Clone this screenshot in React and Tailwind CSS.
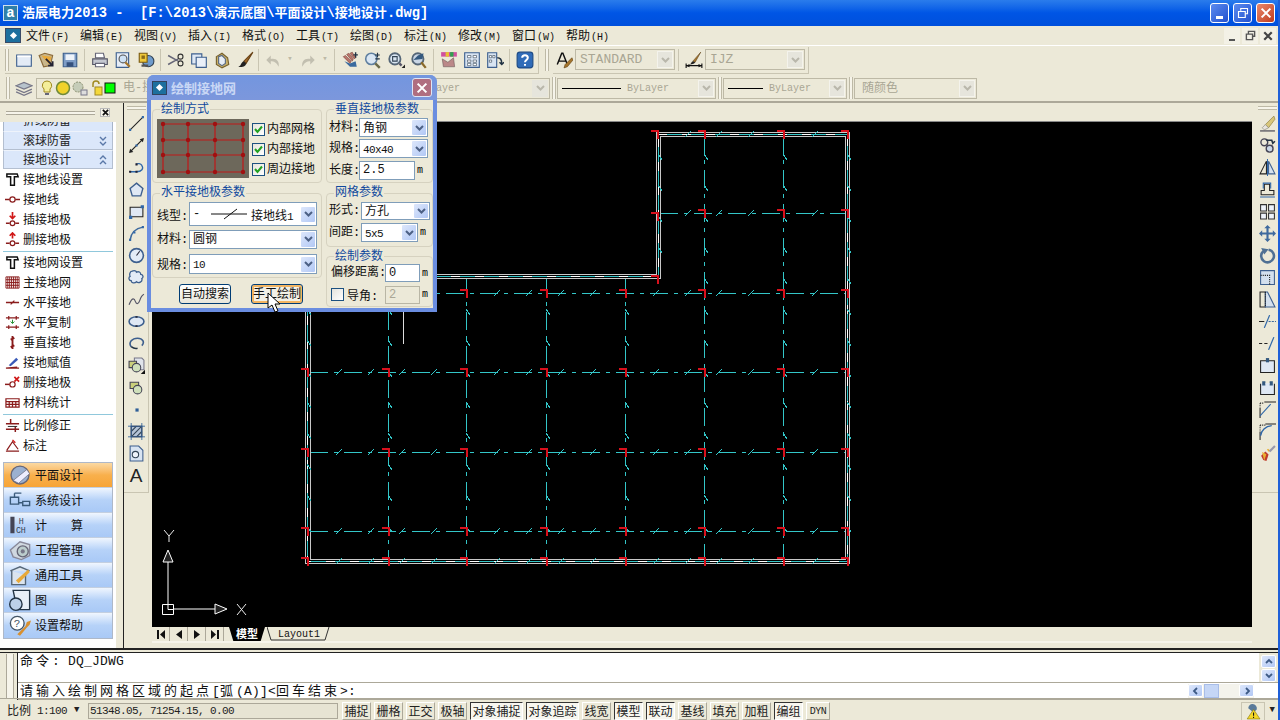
import React from "react"

function Mix({ text, latin }) {
  return text.split(/([\u3000-\u9fff\uff00-\uffef]+)/).map((p, i) =>
    /[\u3000-\u9fff\uff00-\uffef]/.test(p) ? <span key={i}>{p}</span> : <span key={i} className={latin}>{p}</span>
  )
}

const Svg = ({ s = 16, children }) => (
  <svg width={s} height={s} viewBox="0 0 16 16" fill="none" className="shrink-0">{children}</svg>
)

const DK = "#8a1c1c"

const tb = {
  new: <><path d="M1.5 3.5h13v10h-13z" fill="#e3ebf6" stroke="#3d5f8e" /><path d="M2 4h12v1.5H2z" fill="#fff" /></>,
  open: <><path d="M1 4l5-2 7 2-2 9-6 1z" fill="#c9b68a" stroke="#8a6a3a" /><path d="M3 4l9 1-2 7" fill="#e8a93a" /><path d="M7 7l6 6M9 13h4V9" stroke="#223" strokeWidth="1.6" /></>,
  save: <><path d="M2 2h12v12H2z" fill="#7d9cc6" stroke="#3d5f8e" /><path d="M4 3h8v5H4z" fill="#eef3fa" /><path d="M5 10h6v4H5z" fill="#34507c" /></>,
  print: <><path d="M4 2h7l1 4H4z" fill="#fff" stroke="#667" /><path d="M1.5 7h13v5h-13z" fill="#c5c8d0" stroke="#556" /><path d="M4 11h8v3H4z" fill="#fff" stroke="#667" /></>,
  preview: <><path d="M2 1.5h11v13H2z" fill="#e6edf7" stroke="#3d5f8e" /><circle cx="8" cy="7" r="3.5" fill="#cfe2f5" stroke="#555" /><path d="M10 10l4 4" stroke="#a5752c" strokeWidth="2" /></>,
  publish: <><circle cx="10" cy="9" r="5" fill="#6f9bcc" stroke="#345" /><path d="M2 2h7v8H2z" fill="#f0c93a" stroke="#7a5a10" /><path d="M4 4h3v3H4z" fill="#8a6a18" /><path d="M4 13h6" stroke="#555" strokeWidth="2" /></>,
  cut: <><circle cx="12" cy="5" r="2.2" stroke="#333" /><circle cx="12" cy="11" r="2.2" stroke="#333" /><path d="M1 4l9 5M1 12l9-5" stroke="#667" strokeWidth="1.3" /></>,
  copy: <><path d="M1.5 2.5h9v9h-9z" fill="#dfe8f4" stroke="#3d5f8e" /><path d="M5.5 5.5h9v9h-9z" fill="#e9eff8" stroke="#3d5f8e" /></>,
  paste: <><path d="M3 5l5-3 5 4 1 6-6 3-5-3z" fill="#c8b06a" stroke="#76602c" /><path d="M5 5l3-1 3 3v4l-3 2-3-2z" fill="#e8eef6" stroke="#5a6a80" /></>,
  brush: <><path d="M15 1L7 9l2 2z" fill="#a06a2c" stroke="#6a4418" /><path d="M7 9c-3 1-2 4-5 5 4 1 7-1 7-3z" fill="#222" /></>,
  undo: <path d="M13 14c1-5-2-8-7-7V4L2 8l4 4V9c3 0 5 1 7 5z" fill="#c2bfb0" />,
  redo: <path d="M3 14c-1-5 2-8 7-7V4l4 4-4 4V9c-3 0-5 1-7 5z" fill="#c2bfb0" />,
  pan: <><path d="M2 5l6 6 1-2-5-5zM5 3l5 6 1-2-4-5zM8 2l4 5 1-1-3-5z" fill="#b9756c" stroke="#7a4038" strokeWidth=".5" /><path d="M3 9l5 5h6l-1-5-5 2z" fill="#3a6a9e" /><path d="M13 1v5M11 3.5h4" stroke="#234" strokeWidth="1.2" /></>,
  zoom: <><circle cx="6.5" cy="7" r="5" fill="#d9e6f3" stroke="#5f7f9f" strokeWidth="1.4" /><path d="M10 11l4 4" stroke="#6a6a4a" strokeWidth="2.2" /><path d="M12 1.5v4M10 3.5h4M10 7h4" stroke="#234" /></>,
  zoomw: <><circle cx="7" cy="7" r="5" fill="#d9e6f3" stroke="#567" strokeWidth="1.6" /><path d="M5 5h4v4H5z" stroke="#345" /><path d="M11 11l2 2" stroke="#556" strokeWidth="2" /><path d="M13 15h3v-3z" fill="#222" /></>,
  zoomp: <><circle cx="7" cy="7" r="5" fill="#c9d6e6" stroke="#567" strokeWidth="1.6" /><path d="M10 10l4 5" stroke="#8a6a2a" strokeWidth="2" /><path d="M3 8l4-4 5-2-1 5z" fill="#34597f" /></>,
  palette: <><path d="M1 1h14v4H1z" fill="#d050a0" /><path d="M5 1h3v4H5z" fill="#e8c030" /><path d="M9 1h3v4H9z" fill="#30a050" /><path d="M2 7l5 3 5-4 1 8H3z" fill="#b88" stroke="#655" strokeWidth=".5" /></>,
  props: <><path d="M1.5 1.5h13v13h-13z" fill="#d8e4f2" stroke="#3d5f8e" /><path d="M4 4h3v2H4zM9 4h3v2H9zM4 8h3v2H4zM9 8h3v2H9zM4 11h3v2H4zM9 11h3v2H9z" fill="#fff" stroke="#456" strokeWidth=".6" /></>,
  design: <><path d="M1.5 1.5h8v13h-8z" fill="#d8e4f2" stroke="#3d5f8e" /><path d="M3 4h2v2H3zM6 4h2v2H6zM3 8h2v2H3z" fill="#fff" stroke="#456" strokeWidth=".6" /><path d="M10 6c3 0 4 2 4 5M12 10l2 2 2-2" stroke="#234" strokeWidth="1.3" /></>,
  help: <><rect x="1" y="1" width="14" height="14" rx="2.5" fill="#2f6bb8" stroke="#1d4a85" /><path d="M5.5 6c0-3 5-3 5 0 0 2-2.500 2-2.500 4M8 11.500v1.500" stroke="#fff" strokeWidth="1.800" /></>,
  textStyle: <><path d="M2 12L6 2h1l4 10M3.500 9h6" stroke="#111" strokeWidth="1.300" /><path d="M15 6l-6 6-1 3 3-1 5-6z" fill="#a5752c" stroke="#5a3a10" strokeWidth=".5" /></>,
  dim: <><path d="M1 11v4M15 11v4M1 13h14" stroke="#111" /><path d="M1 13l3-1.500v3zM15 13l-3-1.500v3z" fill="#111" /><path d="M14 1L7 9l2 1z" fill="#a5752c" stroke="#5a3a10" strokeWidth=".5" /><path d="M7 9c-2 1-1 2-3 3 3 0 5-1 5-2z" fill="#222" /></>,
  layers: <><path d="M1 6l7-3 7 3-7 3z" fill="#b7c3cc" stroke="#778" /><path d="M1 9l7 3 7-3M1 11.500l7 3 7-3" stroke="#778" strokeWidth="1.200" /></>,
}

const dr = {
  line: <><path d="M2 14L14 2" stroke="#222" /><path d="M1 13h2v2H1zM13 1h2v2h-2z" fill="#2f67a8" /></>,
  xline: <><path d="M2 14L14 2" stroke="#222" strokeWidth="1.200" /><path d="M15 1l-4 1 3 3zM1 15l4-1-3-3z" fill="#222" /><path d="M7 7h2v2H7z" fill="#2f67a8" /></>,
  pline: <><path d="M2 12h6c5 0 7-3 5-6-1-2-4-2-5-1" stroke="#2f67a8" strokeWidth="1.200" /><path d="M1 11h2v2H1zM7 11h2v2H7zM7 4h2v2H7z" fill="#223" /></>,
  polygon: <path d="M8 2l6 5-2 7H4L2 7z" fill="#dfe8f4" stroke="#3d5f8e" strokeWidth="1.300" />,
  rect: <><path d="M2 4h12v9H2z" fill="#dfe8f4" stroke="#222" /><path d="M12 2h3v3h-3zM1 12h3v3H1z" fill="#2f67a8" /></>,
  arc: <><path d="M2 14C3 7 8 3 14 2" stroke="#3d6a9e" strokeWidth="1.400" /><path d="M1 13h2v2H1zM13 1h2v2h-2zM5 6h2v2H5z" fill="#2f67a8" /></>,
  circle: <><circle cx="8" cy="8" r="6.500" fill="#e3ebf6" stroke="#3d5f8e" strokeWidth="1.500" /><path d="M8 8l3-4" stroke="#223" /></>,
  cloud: <path d="M4 2c2-1 4 0 4 1 2-1 4 0 4 2 2 0 3 3 1 4 1 3-3 5-5 3-2 2-5 1-5-1-2 0-3-3-1-4C1 5 2 2 4 2z" fill="#e3ebf6" stroke="#3d5f8e" strokeWidth="1.200" />,
  spline: <path d="M1 13c3-8 5-6 6-3s3 2 4-1 2-5 4-6" stroke="#556" strokeWidth="1.100" />,
  ellipse: <><ellipse cx="8" cy="8" rx="7" ry="4.500" fill="#dfe8f4" stroke="#3d5f8e" strokeWidth="1.500" /><path d="M7 3h2v1.500H7zM7 11.500h2V13H7z" fill="#223" /></>,
  ellarc: <><path d="M3 11C0 7 4 3 9 3s7 4 4 7" stroke="#3d5f8e" strokeWidth="1.500" /><path d="M3 11c2 1.500 4 2 6 1.500" stroke="#234" strokeWidth="1.500" /></>,
  insert: <><path d="M6 1h7l2 2v9H6z" fill="#dfe3ea" stroke="#778" /><path d="M1 4h7v6H1z" fill="#c9cf7a" stroke="#445" /><circle cx="8" cy="10" r="4" fill="#cfe0ba" stroke="#445" /><path d="M12 16l4-4v4z" fill="#111" /></>,
  block: <><path d="M2 3h8v6H2z" fill="#c9cf7a" stroke="#445" /><circle cx="9" cy="10" r="4" fill="#cfe0ba" stroke="#445" /></>,
  point: <path d="M7 7h3v3H7z" fill="#2f5f98" />,
  hatch: <><path d="M3 3h10v10H3z" fill="#b5c4d8" stroke="#223" /><path d="M3 8l5-5M3 13L13 3M8 13l5-5" stroke="#345" /><path d="M3 0v16M13 0v16M0 3h16M0 13h16" stroke="#2f5f98" strokeWidth=".8" /></>,
  region: <><path d="M2 1h8l4 4v10H2z" fill="#d8e4f2" stroke="#3d5f8e" /><circle cx="7" cy="9" r="3" stroke="#345" fill="#eef3fa" /></>,
}

const md = {
  erase: <><path d="M14 1L6 9l3 3 6-8z" fill="#d8c67a" stroke="#8a7a3a" strokeWidth=".6" /><path d="M6 9l-3 3 2 2 4-2z" fill="#e8e4de" stroke="#887" strokeWidth=".6" /><path d="M1 15h14" stroke="#334" /></>,
  copy2: <><circle cx="5" cy="5" r="3.200" stroke="#445" strokeWidth="1.300" /><circle cx="10" cy="11" r="3.200" stroke="#445" strokeWidth="1.300" fill="#cbd8e8" /><path d="M7 3h5l1 3 2-2" stroke="#234" strokeWidth="1.500" /></>,
  mirror: <><path d="M7 2v12H1z" stroke="#222" /><path d="M9 2v12h6z" fill="#d4e0ee" stroke="#3d5f8e" /><path d="M8 0v16" stroke="#2f67a8" /></>,
  offset: <><path d="M2 9h3V3h5v6h4v4H2z" stroke="#222" /><path d="M1 15h14M4 7V2h7v5" stroke="#2f67a8" /></>,
  array: <path d="M1.500 1.500h5.500v6H1.500zM9 1.500h5.500v6H9zM1.500 9.500h5.500v5.500H1.500zM9 9.500h5.500v5.500H9z" fill="#eef3fa" stroke="#333" />,
  move: <path d="M8 0l3 3H9v4h4V5l3 3-3 3V9H9v4h2l-3 3-3-3h2V9H3v2L0 8l3-3v2h4V3H5z" fill="#3f6a9e" />,
  rotate: <><path d="M4 4a6 6 0 1 0 5-1.500" stroke="#4f7094" strokeWidth="2.400" /><path d="M2 1l7 1-4 5z" fill="#4f7094" /></>,
  scale: <><path d="M1.500 1.500h13v13h-13z" fill="#d4e0ee" stroke="#3d5f8e" /><path d="M1.500 6h8.500v8.500" stroke="#222" strokeDasharray="1 1" /></>,
  stretch: <><path d="M1 1h5v14H1z" stroke="#222" /><path d="M6 1h2l7 14H6z" fill="#d4e0ee" stroke="#3d5f8e" /><path d="M6 1v14" stroke="#222" strokeDasharray="1 1" /></>,
  trim: <><path d="M0 8h5" stroke="#222" /><path d="M9 8h7" stroke="#3d6a9e" strokeDasharray="2 1" /><path d="M5 14L10 2" stroke="#2f67a8" strokeWidth="1.200" /></>,
  extend: <><path d="M0 8h3M5 8h3" stroke="#222" /><path d="M9 14L14 2" stroke="#2f67a8" strokeWidth="1.200" /></>,
  brk: <><path d="M1.500 3.500h13v11h-13z" fill="#dfe8f4" stroke="#222" /><path d="M6.500 1h3v4h-3z" fill="#34597f" /></>,
  brk2: <><path d="M1.500 4.500v10h13v-10" fill="#dfe8f4" stroke="#222" /><path d="M3 2h3v4H3zM10 2h3v4h-3z" fill="#34597f" /><path d="M6 4.500h4" stroke="#dfe8f4" /></>,
  chamfer: <><path d="M1 16V6M5 1h11" stroke="#222" /><path d="M1 14L11 3" stroke="#2f67a8" /><path d="M1 2h4M1 2v4" stroke="#222" strokeDasharray="1 1" /></>,
  fillet: <><path d="M1 16V8M6 1h10" stroke="#222" /><path d="M1.500 12C2 7 6 3 12 2.500" stroke="#2f67a8" strokeWidth="1.300" /><path d="M1 2h5M1 2v5" stroke="#222" strokeDasharray="1 1" /></>,
  explode: <><path d="M2 10l4-4 3 3-2 6-3-1z" fill="#c0392b" /><path d="M4 8l2 1-1 3zM8 4l2 2" stroke="#e8b030" strokeWidth="1.500" /><path d="M10 6l5-5" stroke="#99a" strokeWidth="2" /></>,
}

const li = {
  wrench: <path d="M2 2h11l1 3h-4v9H6V5H2z" fill="#fff" stroke="#111" strokeWidth="1.600" />,
  ground: <><path d="M0 8h5M11 8h5" stroke={DK} strokeWidth="1.600" /><circle cx="8" cy="8" r="2.800" stroke={DK} strokeWidth="1.300" /></>,
  ins: <><path d="M8 0v6M5 4l3 3 3-3" stroke="#d01818" strokeWidth="1.800" /><path d="M1 12h4M11 12h4" stroke={DK} strokeWidth="1.600" /><circle cx="8" cy="12" r="2.500" stroke={DK} strokeWidth="1.300" /></>,
  del: <><path d="M8 7V1M5 4l3-3 3 3" stroke="#d01818" strokeWidth="1.800" /><path d="M1 12h4M11 12h4" stroke={DK} strokeWidth="1.600" /><circle cx="8" cy="12" r="2.500" stroke={DK} strokeWidth="1.300" /></>,
  grid: <path d="M1 2h14v12H1zM3 2v12M5 2v12M7 2v12M9 2v12M11 2v12M13 2v12M1 5h14M1 8h14M1 11h14" fill="#fff" stroke={DK} />,
  hz: <><path d="M1 8h14" stroke={DK} strokeWidth="1.600" /><path d="M6 10l4-4" stroke={DK} strokeWidth="1.300" /></>,
  hzc: <><path d="M1 3h14M1 13h14M4 1v4M12 1v4M4 11v4M12 11v4" stroke={DK} strokeWidth="1.300" /><path d="M8 5v4M6 7l2 2 2-2" stroke="#1a8a2a" /></>,
  vt: <path d="M8 1v14M6 5l4-2M6 13l4-2" stroke={DK} strokeWidth="2" />,
  assign: <><path d="M1 14h14M1 14l12-1" stroke={DK} strokeWidth="1.300" /><path d="M4 11l8-8 2 2-8 7z" fill="#3a5ab8" /></>,
  remove: <><path d="M0 10h5" stroke={DK} strokeWidth="1.600" /><circle cx="8" cy="10" r="2.800" stroke={DK} strokeWidth="1.300" /><path d="M10 2l5 5M15 2l-5 5" stroke="#d01818" strokeWidth="1.800" /></>,
  table: <path d="M1 4h14v9H1zM1 7h14M1 10h14M4.500 7v6M8 7v6M11.500 7v6" fill="#fff" stroke={DK} strokeWidth="1.300" />,
  ratio: <><path d="M1 6h14M1 12h14M6 1v6M11 9v6" stroke={DK} strokeWidth="1.600" /><path d="M3 9h10" stroke="#222" /></>,
  mark: <><path d="M1 14h14M2 13L8 4l6 8" stroke={DK} strokeWidth="1.300" /><path d="M8 2l3 3" stroke="#d01818" strokeWidth="1.500" /></>,
}

function Grip({ className = "" }) {
  return <div className={"w-[4px] h-[22px] border-x border-[#bdb9a6] bg-[#f6f4ea] shrink-0 " + className} />
}

function Sep({ w = "w-[7px]" }) {
  return <div className={w + " h-[22px] flex justify-center shrink-0"}><div className="w-px h-full bg-[#c9c5b2]" /></div>
}

function Tool({ icon, w = "w-[23px]" }) {
  return <div className={w + " h-[22px] flex items-center justify-center shrink-0"}><Svg s={18}>{icon}</Svg></div>
}

function Drop() {
  return <div className="w-[12px] h-[22px] flex items-center justify-center text-[#bdb9a6] text-[9px] shrink-0">▾</div>
}

function Chevron({ color = "#9c9a8e" }) {
  return (
    <svg width="9" height="6" viewBox="0 0 9 6" fill="none"><path d="M1 1l3.500 3.500L8 1" stroke={color} strokeWidth="2" /></svg>
  )
}

function GreyCombo({ w, children, size = "text-[10px]" }) {
  return (
    <div className={w + " " + size + " h-[21px] border border-[#bdb9a6] bg-[#ece9d8] flex items-center shrink-0 text-[#a9a694] overflow-hidden"}>
      <div className="flex-1 flex items-center gap-[6px] pl-[4px] min-w-0 whitespace-nowrap">{children}</div>
      <div className="w-[16px] h-[17px] mr-[1px] bg-[#e6e5dc] border border-[#f4f3ec] flex items-center justify-center shrink-0"><Chevron color="#b9b7ab" /></div>
    </div>
  )
}

function TitleBar() {
  const latin = "text-[13.75px]"
  return (
    <div className="h-[26px] shrink-0 flex items-center bg-gradient-to-b from-[#2a7cec] via-[#0055e5] to-[#0050dc] text-white font-bold text-[13px] pl-[3px] pr-[3px]">
      <div className="w-[15px] h-[16px] bg-[#2f7fa8] border border-[#cfe0ee] flex items-center justify-center text-[14px] leading-none mr-[4px]">a</div>
      <div className="flex-1 whitespace-pre pt-[2px]"><Mix text="浩辰电力2013 -  [F:\2013\演示底图\平面设计\接地设计.dwg]" latin={latin} /></div>
      <div className="flex gap-[4px]">
        <WinBtn><div className="w-[7px] h-[3px] bg-white mt-[8px]" /></WinBtn>
        <WinBtn><Svg s={12}><path d="M5 5V2h9v7h-3M2 6h9v8H2z" stroke="#fff" strokeWidth="1.500" /></Svg></WinBtn>
        <WinBtn red><Svg s={14}><path d="M3 3l10 10M13 3L3 13" stroke="#fff" strokeWidth="2.400" /></Svg></WinBtn>
      </div>
    </div>
  )
}

function WinBtn({ red, children }) {
  return (
    <div className={"w-[19px] h-[20px] rounded-[3px] border border-white flex items-center justify-center " + (red ? "bg-gradient-to-br from-[#e8886c] to-[#c03a18]" : "bg-gradient-to-br from-[#5c8bef] to-[#2350cf]")}>
      {children}
    </div>
  )
}

function MenuBar() {
  const items = [["文件", "(F)"], ["编辑", "(E)"], ["视图", "(V)"], ["插入", "(I)"], ["格式", "(O)"], ["工具", "(T)"], ["绘图", "(D)"], ["标注", "(N)"], ["修改", "(M)"], ["窗口", "(W)"], ["帮助", "(H)"]]
  return (
    <div className="h-[20px] shrink-0 flex items-center border-b border-white pl-[5px] pr-[2px] text-[12px] text-[#111]">
      <div className="w-[16px] h-[15px] bg-[#1d6f9e] border border-[#3a4a66] mr-[5px] flex items-center justify-center"><div className="w-[5px] h-[5px] bg-white rotate-45" /></div>
      {items.map(([a, b]) => (
        <div key={a} className="w-[54px] whitespace-nowrap shrink-0 pt-[2px]">{a}<span className="text-[10px] ml-[1px]">{b}</span></div>
      ))}
      <div className="flex-1" />
      <div className="flex gap-[2px]">
        <div className="w-[16px] h-[16px] bg-[#f3f1e6] flex items-end justify-center pb-[3px]"><div className="w-[6px] h-[2px] bg-[#555]" /></div>
        <div className="w-[16px] h-[16px] bg-[#f3f1e6] flex items-center justify-center"><Svg s={11}><path d="M5 5V2h9v7h-3M2 6h9v8H2z" stroke="#555" strokeWidth="2" /></Svg></div>
        <div className="w-[16px] h-[16px] bg-[#f3f1e6] flex items-center justify-center"><Svg s={10}><path d="M2 2l12 12M14 2L2 14" stroke="#444" strokeWidth="3.500" /></Svg></div>
      </div>
    </div>
  )
}

function ToolbarOne() {
  return (
    <div className="h-[28px] shrink-0 flex items-center pl-[5px]">
      <div className="flex items-center h-[27px] w-[534px] border-r border-b border-[#c9c5b2] shrink-0">
        <Grip className="mr-[3px]" />
        <Tool icon={tb.new} /><Tool icon={tb.open} /><Tool icon={tb.save} /><Sep />
        <Tool icon={tb.print} /><Tool icon={tb.preview} /><Tool icon={tb.publish} /><Sep />
        <Tool icon={tb.cut} /><Tool icon={tb.copy} /><Tool icon={tb.paste} /><Tool icon={tb.brush} /><Sep w="w-[5px]" />
        <Tool icon={tb.undo} /><Drop /><Tool icon={tb.redo} /><Drop /><Sep />
        <Tool icon={tb.pan} /><Tool icon={tb.zoom} /><Tool icon={tb.zoomw} /><Tool icon={tb.zoomp} /><Sep />
        <Tool icon={tb.palette} /><Tool icon={tb.props} /><Tool icon={tb.design} /><Sep />
        <Tool icon={tb.help} />
      </div>
      <Grip className="ml-[6px] mr-[4px]" />
      <div className="flex items-center h-[27px] w-[256px] border-r border-b border-[#c9c5b2] shrink-0">
        <Tool icon={tb.textStyle} w="w-[22px]" />
        <GreyCombo w="w-[100px]" size="text-[13px]">STANDARD</GreyCombo>
        <Sep />
        <Tool icon={tb.dim} />
        <GreyCombo w="w-[100px]" size="text-[13px]">IJZ</GreyCombo>
      </div>
    </div>
  )
}

function ToolbarTwo() {
  return (
    <div className="h-[29px] shrink-0 flex items-center pl-[6px] pt-[1px] border-b-2 border-[#aca899]">
      <Grip className="mr-[4px]" />
      <Tool icon={tb.layers} w="w-[20px]" />
      <div className="w-[2px] shrink-0" />
      <div className="w-[514px] h-[21px] border border-[#bdb9a6] flex items-center shrink-0 text-[10px] text-[#a9a694] pl-[2px] overflow-hidden">
        <svg width="84" height="18" viewBox="0 0 84 18" fill="none" className="shrink-0">
          <path d="M8 2a4.500 4.500 0 0 1 3 8v3H5v-3a4.500 4.500 0 0 1 3-8z" fill="#f4ee9a" stroke="#a08a20" />
          <path d="M6 15h4" stroke="#667" strokeWidth="2" />
          <circle cx="24" cy="9" r="6.500" fill="#f0d22a" stroke="#6f8a3a" strokeWidth="1.500" />
          <circle cx="39" cy="8" r="5" fill="#c5ccb8" stroke="#8a8f70" strokeDasharray="2 1" />
          <rect x="42" y="11" width="6" height="5" fill="#ddd" stroke="#778" />
          <path d="M54 8V5a3 3 0 0 1 6 0" stroke="#a08a20" strokeWidth="1.500" />
          <rect x="56" y="8" width="7" height="8" fill="#f4d83a" stroke="#a08a20" />
          <rect x="66" y="4" width="10" height="10" fill="#00ff00" stroke="#111" />
        </svg>
        <span className="text-[12px] whitespace-nowrap">电-接地</span>
        <div className="flex-1 text-right pr-[72px] whitespace-nowrap">ByLayer</div>
        <div className="w-[16px] h-[17px] mr-[1px] bg-[#e6e5dc] flex items-center justify-center shrink-0"><Chevron color="#b9b7ab" /></div>
      </div>
      <Grip className="ml-[2px] mr-[1px]" />
      <GreyCombo w="w-[159px]"><div className="w-[59px] h-px bg-black" /><span>ByLayer</span></GreyCombo>
      <Grip className="ml-[2px] mr-[1px]" />
      <GreyCombo w="w-[124px]"><div className="w-[35px] h-px bg-black" /><span>ByLayer</span></GreyCombo>
      <Grip className="ml-[2px] mr-[1px]" />
      <GreyCombo w="w-[123px]" size="text-[12px]"><span className="pl-[3px] pt-[2px]">随颜色</span></GreyCombo>
    </div>
  )
}

function LeftPanel() {
  const groupA = [[li.wrench, "接地线设置"], [li.ground, "接地线"], [li.ins, "插接地极"], [li.del, "删接地极"]]
  const groupB = [[li.wrench, "接地网设置"], [li.grid, "主接地网"], [li.hz, "水平接地"], [li.hzc, "水平复制"], [li.vt, "垂直接地"], [li.assign, "接地赋值"], [li.remove, "删接地极"], [li.table, "材料统计"]]
  const groupC = [[li.ratio, "比例修正"], [li.mark, "标注"]]
  const row = ([ic, t], i) => (
    <div key={i} className="h-[20px] flex items-center pl-[5px] gap-[3px] text-[12px] text-[#111]"><Svg s={15}>{ic}</Svg><span className="pt-[4px]">{t}</span></div>
  )
  const nav = [
    ["平面设计", <g key="a"><circle cx="8" cy="8" r="6.500" fill="#9bb0d0" stroke="#667" /><path d="M3 12L13 4l2 3-8 7z" fill="#eef" stroke="#667" strokeWidth=".5" /></g>, true],
    ["系统设计", <g key="b"><path d="M1 6h6v5H1zM10 9h5v3h-5zM4 3h5M4 3v3M7 10h3" stroke="#3a5a7a" fill="none" /></g>],
    ["计　　算", <g key="c"><path d="M1 2h3v12H1z" fill="#445" /><text x="7" y="7" fontSize="6" fill="#345">H</text><text x="5" y="14" fontSize="6" fill="#345">CH</text></g>],
    ["工程管理", <g key="d"><path d="M1 8l7-6 7 2v8l-6 3-6-2z" fill="#d0d8e0" stroke="#889" /><circle cx="10" cy="9" r="4" fill="#bcc" stroke="#667" /><circle cx="10" cy="9" r="1.500" fill="#778" /></g>],
    ["通用工具", <g key="e"><path d="M1 5l7-3 7 3M2 5v10h10V8" stroke="#567" fill="#dbe4ee" /><path d="M5 12l9-8 1 2-8 8z" fill="#e8a93a" /></g>],
    ["图　　库", <g key="f"><path d="M3 1h12v14H6z" fill="#e8eff8" stroke="#234" /><circle cx="5" cy="11" r="4.500" fill="#bcd0e8" stroke="#234" /></g>],
    ["设置帮助", <g key="g"><circle cx="6" cy="6" r="5" fill="#fff" stroke="#456" /><text x="3.500" y="9" fontSize="8" fill="#456">?</text><path d="M6 14l6-6 1-3 3-1-1 3-2 2-5 6z" fill="#d89030" /></g>],
  ]
  return (
    <aside className="w-[124px] shrink-0 flex border-r border-[#222]">
      <div className="w-[116px] flex flex-col">
        <div className="h-[19px] flex items-center pl-[6px] pr-[5px] gap-[5px] shrink-0">
          <div className="w-[89px] h-[4px] border-y border-[#aca899] bg-[#f6f4ea]" />
          <div className="w-[10px] h-[9px] bg-[#f6f4ea] border border-[#bbb] flex items-center justify-center"><Svg s={7}><path d="M2 2l12 12M14 2L2 14" stroke="#111" strokeWidth="4" /></Svg></div>
        </div>
        <div className="flex-1 bg-white flex flex-col">
          <div className="h-[9px] mx-[3px] w-[110px] bg-[#dbe7fa] border-x border-[#a8b5c8] overflow-hidden relative text-[12px] text-[#222]">
            <div className="absolute left-[19px] -top-[9px]">折线防雷</div>
          </div>
          <AccRow label="滚球防雷" />
          <AccRow label="接地设计" up />
          {groupA.map(row)}
          <div className="mx-[3px] w-[110px] h-px bg-[#90c8dc] mt-[2px]" />
          {groupB.map(row)}
          <div className="mx-[3px] w-[110px] h-px bg-[#90c8dc] mt-[2px]" />
          {groupC.map(row)}
          <div className="mt-[7px] mx-[3px] w-[110px] border border-[#aeb8c8]">
            {nav.map(([t, ic, active]) => (
              <div key={t} className={"h-[25px] flex items-center pl-[5px] gap-[4px] text-[12px] text-[#111] whitespace-pre border-b border-[#c3cfe0] last:border-b-0 " + (active ? "bg-gradient-to-b from-[#fbd9a2] via-[#f8b04c] to-[#f7a436]" : "bg-gradient-to-b from-[#f0f6fe] via-[#b6d2f8] to-[#a9c9f6]")}>
                <Svg s={22}>{ic}</Svg>
                <span className="pt-[3px]">{t}</span>
              </div>
            ))}
          </div>
          <div className="flex-1" />
        </div>
      </div>
      <div className="flex-1" />
    </aside>
  )
}

function AccRow({ label, up }) {
  return (
    <div className="h-[19px] mx-[3px] w-[110px] bg-[#dbe7fa] border border-[#b4bfd0] border-t-[#eef3fb] flex items-center pl-[19px] text-[12px] text-[#222] shrink-0">
      <span className="flex-1 pt-[3px]">{label}</span>
      <svg width="10" height="10" viewBox="0 0 10 10" fill="none" className="mr-[4px]">
        <path d={up ? "M2 4l3-3 3 3M2 9l3-3 3 3" : "M2 1l3 3 3-3M2 6l3 3 3-3"} stroke="#5a78a8" strokeWidth="1.400" />
      </svg>
    </div>
  )
}

function DrawBar() {
  return (
    <div className="w-[25px] shrink-0 h-[390px] border-b border-r border-[#c9c5b2] flex flex-col items-center">
      <div className="w-[19px] h-[4px] border-y border-[#bdb9a6] bg-[#f6f4ea] mt-[3px] mb-[2px] shrink-0" />
      {Object.values(dr).map((ic, i) => (
        <div key={i} className="h-[22px] w-full flex items-center justify-center shrink-0"><Svg s={17}>{ic}</Svg></div>
      ))}
      <div className="h-[22px] w-full flex items-center justify-center text-[19px] leading-none text-[#222] [font-family:'Liberation_Sans',sans-serif]">A</div>
    </div>
  )
}

function RightBar() {
  return (
    <div className="flex-1 flex flex-col items-center pl-[4px] h-[390px] border-b border-[#c9c5b2]">
      <div className="w-[19px] h-[4px] border-y border-[#bdb9a6] bg-[#f6f4ea] mt-[3px] mb-[2px] shrink-0" />
      {Object.values(md).map((ic, i) => (
        <div key={i} className="h-[22px] w-full flex items-center justify-center shrink-0"><Svg s={17}>{ic}</Svg></div>
      ))}
    </div>
  )
}

function Canvas() {
  const cy = "#33c6c8"
  const hs = [[213, 660, 846], [293, 310, 846], [372, 310, 846], [452, 310, 846], [531, 310, 846]]
  const vs = [[704, 136, 559], [783, 136, 559], [388, 278, 559], [466, 278, 559], [546, 278, 559], [625, 278, 559]]
  const xs = [307, 388, 466, 546, 625, 704, 783, 847]
  const ys = [134, 213, 293, 372, 452, 531, 561]
  const hTicks = []
  hs.concat([[134, 660, 846], [561, 310, 846]]).forEach(([y, a, b]) => {
    for (let x = 339; x < b; x += 31.7) if (x > a + 8 && !xs.some((j) => Math.abs(j - x) < 7)) hTicks.push(`M${Math.round(x) - 3} ${y + 3}L${Math.round(x) + 3} ${y - 3}`)
  })
  const vTicks = []
  vs.concat([[307, 278, 559], [658, 136, 274], [847, 136, 559]]).forEach(([x, a, b]) => {
    for (let y = 157; y < b; y += 31) if (y > a + 5) vTicks.push(`M${x} ${y - 3}L${x + 4} ${y + 3}`)
  })
  const marks = []
  xs.forEach((x) => ys.forEach((y) => {
    if (y < 293 && x < 660) return
    marks.push(`M${x - 6} ${y - 3}H${x + 1}V${y + 5}`)
  }))
  marks.push("M651 131H658V139", "M651 213H658V221", "M651 276H658V284")
  return (
    <svg width="1100" height="505" viewBox="152 122 1100 505" className="block bg-black shrink-0" fill="none">
      <g shapeRendering="crispEdges">
        {hs.map(([y, a, b]) => <path key={y} d={`M${a} ${y}H${b}`} stroke={cy} strokeDasharray="18 6 4 6" />)}
        {vs.map(([x, a, b]) => <path key={x} d={`M${x} ${a}V${b}`} stroke={cy} strokeDasharray="18 6 4 6" />)}
        <path d="M656 132H849V563H305V274H656Z" stroke="#c8c8c8" />
        <path d="M660 136H845V559H310V278H660Z" stroke="#c8c8c8" />
        <path d="M658 134H847V561H307.500V276H658Z" stroke={cy} />
        <path d="M658 134H847V561H307.500V276H658Z" stroke="#fff" strokeDasharray="9 15" />
        <path d="M403 310V344" stroke="#ddd" />
        <path d={hTicks.join("")} stroke={cy} />
        <path d={vTicks.join("")} stroke={cy} />
        <path d={marks.join("")} stroke="#d8101c" strokeWidth="2" />
      </g>
      <path d="M168 604V562M173 609H215" stroke="#fff" />
      <path d="M168 550l-5 12h10zM227 609l-12-5v10z" stroke="#fff" fill="#222" />
      <path d="M162.500 604.500h11v10h-11zM168 604.500v5h5.500" stroke="#fff" />
      <path d="M164 530l5 6 5-6M169 536v6M237 604l9 11M246 604l-9 11" stroke="#eee" />
    </svg>
  )
}

function TabRow() {
  return (
    <div className="h-[14px] flex items-stretch text-[10px] shrink-0">
      {[0, 1, 2, 3].map((i) => (
        <div key={i} className="w-[18px] border-r border-[#aca899] bg-[#ece9d8] flex items-center justify-center">
          <svg width="8" height="9" viewBox="0 0 8 9" fill="#111">
            {i === 0 && <path d="M0 0h2v9H0zM8 0v9L3 4.500z" />}
            {i === 1 && <path d="M7 0v9L1 4.500z" />}
            {i === 2 && <path d="M1 0v9l6-4.500z" />}
            {i === 3 && <path d="M6 0h2v9H6zM0 0v9l5-4.500z" />}
          </svg>
        </div>
      ))}
      <div className="w-[5px]" />
      <div className="w-[36px] bg-black text-white font-bold text-[11px] flex items-center justify-center [clip-path:polygon(0_0,100%_0,88%_100%,12%_100%)]"><span className="pt-[2px]">模型</span></div>
      <div className="relative w-[64px] flex items-center justify-center ml-[2px] text-[10px] text-[#111]">
        Layout1
        <svg className="absolute inset-0" width="64" height="14" viewBox="0 0 64 14" fill="none"><path d="M0 0l4 13h54l4-13" stroke="#333" /></svg>
      </div>
    </div>
  )
}

function Check({ on }) {
  return (
    <div className="w-[13px] h-[13px] border border-[#1c5180] bg-gradient-to-br from-[#e4e3dc] to-white flex items-center justify-center shrink-0">
      {on && <svg width="9" height="9" viewBox="0 0 9 9" fill="none"><path d="M1 4l2.500 3L8 1.500" stroke="#21a121" strokeWidth="2" /></svg>}
    </div>
  )
}

function Group({ title, h, left = "left-[7px]", top = "-top-[8px]", children }) {
  return (
    <div className={h + " relative rounded-[4px] border border-[#d6d2c0] shrink-0"}>
      <div className={"absolute " + top + " " + left + " px-[1px] bg-[#ece9d8] text-[#114a9e] text-[12px] leading-[14px] whitespace-nowrap"}>{title}</div>
      {children}
    </div>
  )
}

function Field({ w, h = "h-[19px]", children }) {
  return (
    <div className={w + " " + h + " border border-[#7f9db9] bg-white flex items-center shrink-0 overflow-hidden"}>
      <div className="flex-1 pl-[3px] pt-[2px] whitespace-nowrap text-[12px] text-[#111] min-w-0">{children}</div>
      <div className="w-[16px] h-full max-h-[17px] bg-gradient-to-br from-[#dde7fb] to-[#b2c8f5] border border-white rounded-[2px] flex items-center justify-center shrink-0"><Chevron color="#4d6185" /></div>
    </div>
  )
}

function Input({ value, disabled }) {
  return (
    <div className={"h-[18px] w-[35px] border flex items-center pl-[3px] text-[12px] " + (disabled ? "border-[#b9b6a5] bg-[#ece9d8] text-[#aaa796]" : "border-[#7f9db9] bg-white text-[#111]")}>{value}</div>
  )
}

const Num = ({ children }) => <span className="text-[11px] tracking-[-0.6px]">{children}</span>
const Unit = () => <span className="text-[10px] ml-[2px] tracking-[-0.6px]">m</span>

function Dialog() {
  const label = "text-[12px] text-[#111] whitespace-nowrap shrink-0"
  return (
    <div className="absolute left-[147px] top-[75px] w-[290px] h-[237px] rounded-t-[7px] bg-[#6a8de0] flex flex-col">
      <div className="h-[25px] flex items-center pl-[5px] pr-[4px] bg-gradient-to-b from-[#7396df] to-[#7c97dc] rounded-t-[7px] shrink-0">
        <div className="w-[15px] h-[14px] bg-[#1d6f9e] border border-[#33415c] mr-[4px] flex items-center justify-center"><div className="w-[5px] h-[5px] bg-white rotate-45" /></div>
        <div className="flex-1 text-[13px] font-bold text-[#c9d7f5] pt-[4px]">绘制接地网</div>
        <div className="w-[20px] h-[19px] rounded-[3px] border border-[#dfe5f5] bg-[#b06e80] flex items-center justify-center mr-[1px]">
          <Svg s={14}><path d="M3 3l10 10M13 3L3 13" stroke="#fff" strokeWidth="2.400" /></Svg>
        </div>
      </div>
      <div className="mx-[4px] h-[208px] bg-[#ece9d8] flex gap-[4px] pl-[1px] relative">
        <div className="w-[170px] shrink-0 flex flex-col gap-[10px] pt-[9px]">
          <Group title="绘制方式" h="h-[74px]" top="-top-[7px]">
            <div className="flex pl-[4px] pt-[9px] gap-[3px]">
              <svg width="92" height="59" viewBox="0 0 92 59" className="shrink-0">
                <rect width="92" height="59" fill="#6d685b" />
                <path d="M6 5H86M6 21H86M6 36H86M6 53H86M6 5V53M31 5V53M58 5V53M86 5V53" stroke="#c01818" strokeWidth="1.200" />
                {[6, 31, 58, 86].map((x) => [5, 21, 36, 53].map((y) => <circle key={x + "-" + y} cx={x} cy={y} r="2.200" fill="#a01010" />))}
              </svg>
              <div className="flex flex-col gap-[7px] pt-[4px]">
                {["内部网格", "内部接地", "周边接地"].map((t) => (
                  <div key={t} className="flex items-center gap-[2px] h-[13px]"><Check on /><span className={label}>{t}</span></div>
                ))}
              </div>
            </div>
          </Group>
          <Group title="水平接地极参数" h="h-[85px]">
            <div className="flex flex-col pt-[8px] pl-[4px] gap-[3px]">
              <div className="flex items-center gap-[1px]">
                <span className={label + " w-[31px] pt-[5px]"}>线型:</span>
                <Field w="w-[128px]" h="h-[24px]">
                  <div className="flex items-center -mt-[2px]">
                    <span className="w-[18px]">-</span>
                    <svg width="36" height="12" viewBox="0 0 36 12" fill="none" className="shrink-0 mr-[4px]"><path d="M0 6h36M13 11L26 1" stroke="#111" /></svg>
                    <span className="pt-[6px]">接地线<Num>1</Num></span>
                  </div>
                </Field>
              </div>
              <div className="flex items-center gap-[1px]"><span className={label + " w-[31px] pt-[2px]"}>材料:</span><Field w="w-[128px]">圆钢</Field></div>
              <div className="flex items-center gap-[1px] mt-[1px]"><span className={label + " w-[31px] pt-[4px]"}>规格:</span><Field w="w-[128px]" h="h-[20px]"><Num>10</Num></Field></div>
            </div>
          </Group>
          <div className="flex justify-center gap-[20px] -mt-[4px] pl-[11px] pr-[3px]">
            <div className="w-[52px] h-[20px] rounded-[3px] border border-[#003c74] bg-gradient-to-b from-white to-[#e8e6da] flex items-center justify-center text-[12px] text-[#111] pt-[2px]">自动搜索</div>
            <div className="w-[52px] h-[20px] rounded-[3px] border border-[#003c74] bg-[#f2f0e6] shadow-[inset_0_0_0_2px_#f3b562] flex items-center justify-center text-[12px] text-[#111] pt-[2px]">手工绘制</div>
          </div>
        </div>
        <div className="w-[107px] shrink-0 flex flex-col pt-[9px]">
          <Group title="垂直接地极参数" h="h-[74px]" top="-top-[7px]">
            <div className="flex flex-col gap-[2px] pt-[8px] pl-[2px]">
              <div className="flex items-center"><span className={label + " w-[30px]"}>材料:</span><Field w="w-[69px]">角钢</Field></div>
              <div className="flex items-center"><span className={label + " w-[30px]"}>规格:</span><Field w="w-[69px]"><Num>40x40</Num></Field></div>
              <div className="flex items-center"><span className={label + " w-[30px] pt-[2px]"}>长度:</span><div className="w-[56px] h-[19px] border border-[#7f9db9] bg-white pl-[3px] text-[12px] leading-[17px] text-[#111]">2.5</div><Unit /></div>
            </div>
          </Group>
          <div className="h-[10px]" />
          <Group title="网格参数" h="h-[54px]">
            <div className="flex flex-col gap-[3px] pt-[8px] pl-[2px]">
              <div className="flex items-center"><span className={label + " w-[32px]"}>形式:</span><Field w="w-[69px]" h="h-[18px]">方孔</Field></div>
              <div className="flex items-center"><span className={label + " w-[32px]"}>间距:</span><Field w="w-[57px]"><Num>5x5</Num></Field><Unit /></div>
            </div>
          </Group>
          <div className="h-[9px]" />
          <Group title="绘制参数" h="h-[51px]" top="-top-[7px]">
            <div className="flex flex-col pt-[7px] pl-[4px] gap-[1px]">
              <div className="flex items-center"><span className={label + " w-[54px]"}>偏移距离:</span><Input value="0" /><Unit /></div>
              <div className="flex items-center"><Check /><span className={label + " w-[41px] pl-[3px] pt-[5px]"}>导角:</span><Input value="2" disabled /><Unit /></div>
            </div>
          </Group>
        </div>
      </div>
      <svg className="absolute left-[120px] top-[217px]" width="14" height="21" viewBox="0 0 14 21">
        <path d="M1 1v15l4-3 3 7 3-1-3-7h5z" fill="#fff" stroke="#000" />
      </svg>
    </div>
  )
}

function CommandArea() {
  const latin = "text-[13px] tracking-[0.2px]"
  return (
    <div className="h-[50px] shrink-0 flex flex-col text-[#111]">
      <div className="h-[5px] border-t-2 border-b border-t-[#222] border-b-[#222] bg-[#ece9d8] shrink-0" />
      <div className="flex-1 flex pl-[6px] pb-[3px]">
        <div className="w-[8px] border-x border-[#aca899] bg-[#f6f4ea] my-[1px] shrink-0" />
        <div className="w-[3px] shrink-0" />
        <div className="flex-1 flex flex-col border-l border-[#222] min-w-0">
          <div className="flex-1 flex bg-white border-b border-[#aca899]">
            <div className="flex-1 pl-[2px] text-[13px] tracking-[3px] leading-[16px] pt-[1px] whitespace-pre"><Mix text="命令: DQ_JDWG" latin={latin} /></div>
            <div className="w-[19px] bg-[#ece9d8] flex flex-col items-center pt-[2px] gap-[1px]">
              <ScrollBtn d="M1 5l3-3 3 3" /><ScrollBtn d="M1 2l3 3 3-3" />
            </div>
          </div>
          <div className="h-[17px] flex items-center bg-white border-b border-[#aca899] shrink-0">
            <div className="flex-1 pl-[2px] pt-[2px] text-[13px] tracking-[3px] whitespace-nowrap"><Mix text="请输入绘制网格区域的起点[弧(A)]<回车结束>:" latin={latin} /></div>
            <div className="w-[66px] h-[14px] flex justify-between bg-[#f4f3ec] mr-[24px] relative">
              <ScrollBtn d="M5 1L2 4l3 3" />
              <div className="absolute left-[16px] top-0 w-[15px] h-[14px] bg-[#c5d6f6] border border-[#a8bde8]" />
              <ScrollBtn d="M3 1l3 3-3 3" />
            </div>
          </div>
        </div>
      </div>
    </div>
  )
}

function ScrollBtn({ d }) {
  return (
    <div className="w-[15px] h-[13px] rounded-[2px] bg-gradient-to-br from-[#dde7fb] to-[#b2c8f5] border border-white flex items-center justify-center shrink-0 relative">
      <svg width="8" height="8" viewBox="0 0 8 8" fill="none"><path d={d} stroke="#3d5a85" strokeWidth="1.800" /></svg>
    </div>
  )
}

function StatusBar() {
  const btns = [["捕捉"], ["栅格"], ["正交"], ["极轴"], ["对象捕捉", 1], ["对象追踪", 1], ["线宽"], ["模型", 1], ["联动", 1], ["基线"], ["填充"], ["加粗"], ["编组", 1], ["DYN"]]
  return (
    <div className="h-[22px] shrink-0 flex items-center pl-[7px] pt-[3px] text-[12px] text-[#222] border-t border-[#aca899]">
      <span className="w-[24px] pt-[2px]">比例</span>
      <span className="text-[11px] tracking-[-0.6px] ml-[6px]">1:100</span>
      <span className="text-[9px] ml-[7px] w-[14px]">▼</span>
      <div className="w-[250px] h-[16px] border border-[#aca899] bg-[#e7e4d3] text-[11px] tracking-[-0.6px] leading-[14px] pl-[1px] whitespace-pre shrink-0">51348.05, 71254.15, 0.00</div>
      <div className="flex gap-[3px] ml-[4px]">
        {btns.map(([t, on]) => (
          <div key={t} className={"h-[18px] px-[1px] flex items-center justify-center shrink-0 border " + (t.length > 2 && t !== "DYN" ? "w-[53px] " : t === "DYN" ? "w-[24px] text-[10px] tracking-[-0.5px] " : "w-[29px] ") + (on ? "border-t-[#333] border-l-[#333] border-r-[#fff] border-b-[#fff] bg-[#f7f6ef]" : "border-t-[#fff] border-l-[#fff] border-r-[#aca899] border-b-[#aca899]")}><span className={t === "DYN" ? "" : "pt-[3px]"}>{t}</span></div>
        ))}
      </div>
      <div className="flex-1" />
      <div className="w-[24px] h-[19px] border border-[#c9c5b2] flex items-center justify-center mr-[5px]">
        <Svg s={17}><path d="M8 1a4 4 0 0 0-4 4l5 4 3-3a4 4 0 0 0-4-5z" fill="#5a7a9a" /><path d="M9 6l6 9H3z" fill="#f5d828" stroke="#8a7a10" strokeWidth=".6" /><path d="M9 9v3M9 13v1" stroke="#111" /></Svg>
      </div>
      <span className="text-[9px] mr-[3px]">▼</span>
    </div>
  )
}

export default function App() {
  return (
    <div className="w-[1280px] h-[720px] overflow-hidden relative flex flex-col bg-[#ece9d8] border-r-2 border-[#1f5fd8] [font-family:'Liberation_Mono','Noto_Sans_CJK_SC',monospace]">
      <TitleBar />
      <MenuBar />
      <ToolbarOne />
      <ToolbarTwo />
      <div className="flex flex-1 min-h-0">
        <LeftPanel />
        <DrawBar />
        <div className="w-[3px] shrink-0" />
        <div className="w-[1100px] shrink-0 flex flex-col">
          <div className="h-[19px] shrink-0 border-b border-[#888] bg-[#ece9d8]" />
          <Canvas />
          <TabRow />
          <div className="flex-1 border-t-2 border-[#f6f4ea]" />
        </div>
        <RightBar />
      </div>
      <CommandArea />
      <StatusBar />
      <Dialog />
    </div>
  )
}
